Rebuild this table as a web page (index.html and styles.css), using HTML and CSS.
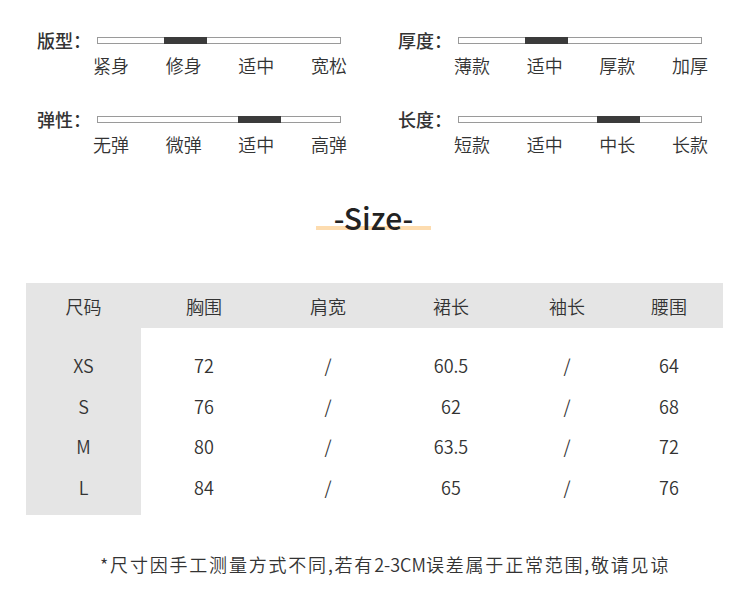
FILE: index.html
```html
<!DOCTYPE html>
<html lang="zh">
<head>
<meta charset="utf-8">
<link rel="stylesheet" href="styles.css">
</head>
<body>
<section class="specs">
  <div class="spec">
    <div class="spec-label">版型：</div>
    <div class="bar"><span class="fill" style="left:66px"></span></div>
    <div class="scale"><span>紧身</span><span>修身</span><span>适中</span><span>宽松</span></div>
  </div>
  <div class="spec">
    <div class="spec-label">厚度：</div>
    <div class="bar"><span class="fill" style="left:66px"></span></div>
    <div class="scale"><span>薄款</span><span>适中</span><span>厚款</span><span>加厚</span></div>
  </div>
  <div class="spec">
    <div class="spec-label">弹性：</div>
    <div class="bar"><span class="fill" style="left:140px"></span></div>
    <div class="scale"><span>无弹</span><span>微弹</span><span>适中</span><span>高弹</span></div>
  </div>
  <div class="spec">
    <div class="spec-label">长度：</div>
    <div class="bar"><span class="fill" style="left:138px"></span></div>
    <div class="scale"><span>短款</span><span>适中</span><span>中长</span><span>长款</span></div>
  </div>
</section>

<h2 class="title"><span class="title-text">-Size-</span></h2>

<div class="table">
  <div class="thead">
    <div>尺码</div><div>胸围</div><div>肩宽</div><div>裙长</div><div>袖长</div><div>腰围</div>
  </div>
  <div class="tbody">
    <div class="row"><div>XS</div><div>72</div><div>/</div><div>60.5</div><div>/</div><div>64</div></div>
    <div class="row"><div>S</div><div>76</div><div>/</div><div>62</div><div>/</div><div>68</div></div>
    <div class="row"><div>M</div><div>80</div><div>/</div><div>63.5</div><div>/</div><div>72</div></div>
    <div class="row"><div>L</div><div>84</div><div>/</div><div>65</div><div>/</div><div>76</div></div>
  </div>
</div>

<p class="note">*尺寸因手工测量方式不同,若有<span class="latin">2-3CM</span>误差属于正常范围,敬请见谅</p>
</body>
</html>
```
FILE: styles.css
```css
* { box-sizing: border-box; }
body {
  margin: 0;
  background: #fff;
  color: #333;
  font-family: "Noto Sans CJK SC", "Noto Sans", sans-serif;
}
.specs {
  display: grid;
  grid-template-columns: 361px 330px;
  row-gap: 30px;
  padding: 28px 0 0 37px;
}
.spec {
  display: grid;
  grid-template-columns: 60px 244px;
  align-items: center;
}
.spec-label {
  font-size: 18px;
  font-weight: 500;
  line-height: 24px;
  color: #333;
}
.bar {
  position: relative;
  height: 7px;
  border: 1px solid #9a9a9a;
  background: #fff;
}
.fill {
  position: absolute;
  top: -1px;
  bottom: -1px;
  width: 43px;
  background: #3b3b3b;
}
.scale {
  grid-column: 2;
  display: flex;
  justify-content: space-between;
  width: 254px;
  margin: 1px 0 0 -4px;
  font-size: 18px;
  font-weight: 350;
  line-height: 24px;
  color: #333;
}
.title {
  margin: 41px 0 0;
  text-align: center;
  font-size: 30px;
  font-weight: 500;
  line-height: 40px;
  color: #222;
}
.title-text {
  position: relative;
  display: inline-block;
  padding: 0 18px;
  margin-left: -3px;
}
.title-text::after {
  content: "";
  position: absolute;
  left: 0;
  right: 0;
  bottom: 7px;
  height: 4px;
  background: #fddcaf;
  z-index: -1;
}
.table {
  margin: 46px 0 0 26px;
  width: 697px;
  font-size: 18px;
  font-weight: 350;
  color: #333;
}
.thead, .row {
  display: grid;
  grid-template-columns: 115px 126px 122px 124px 108px 96px;
  text-align: center;
}
.thead {
  height: 45px;
  align-items: center;
  background: #e5e5e5;
  line-height: 24px;
}
.tbody {
  padding: 17px 0 8px;
  background: linear-gradient(to right, #e5e5e5 115px, #fff 115px);
}
.row {
  height: 40.6px;
  align-items: center;
  line-height: 24px;
}
.note {
  margin: 37px 0 0 100px;
  font-size: 18px;
  font-weight: 350;
  letter-spacing: 1.8px;
  line-height: 24px;
  color: #333;
}
.latin {
  letter-spacing: 0;
}
```
